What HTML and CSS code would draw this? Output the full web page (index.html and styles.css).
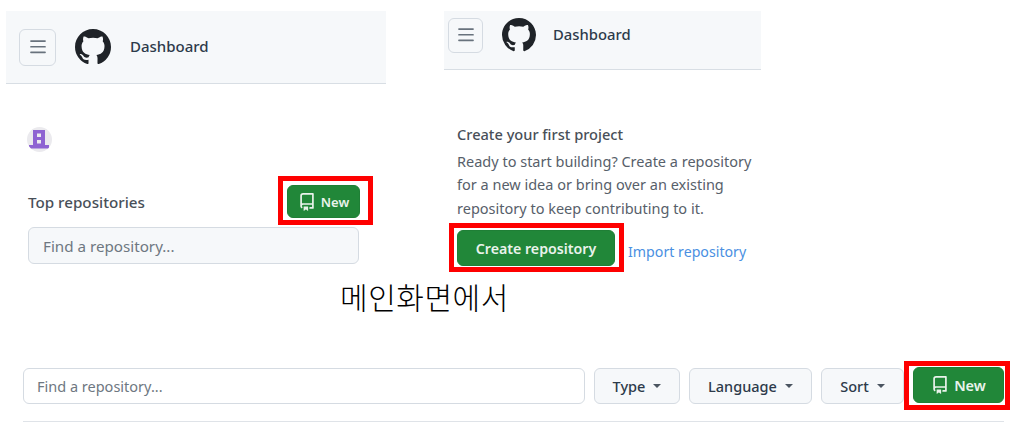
FILE: index.html
```html
<!DOCTYPE html>
<html lang="ko">
<head>
<meta charset="utf-8">
<title>Dashboard</title>
<link rel="stylesheet" href="styles.css">
</head>
<body>
<svg class="defs" width="0" height="0" aria-hidden="true">
  <symbol id="mark" viewBox="0 0 16 16"><path d="M8 0c4.42 0 8 3.58 8 8a8.013 8.013 0 0 1-5.45 7.59c-.4.08-.55-.17-.55-.38 0-.27.01-1.13.01-2.2 0-.75-.25-1.23-.54-1.48 1.78-.2 3.65-.88 3.65-3.95 0-.88-.31-1.59-.82-2.15.08-.2.36-1.02-.08-2.12 0 0-.67-.22-2.2.82-.64-.18-1.32-.27-2-.27-.68 0-1.36.09-2 .27-1.53-1.03-2.2-.82-2.2-.82-.44 1.1-.16 1.92-.08 2.12-.51.56-.82 1.28-.82 2.15 0 3.06 1.86 3.75 3.64 3.95-.23.2-.44.55-.51 1.07-.46.21-1.61.55-2.33-.66-.15-.24-.6-.83-1.23-.82-.67.01-.27.38.01.53.34.19.73.9.82 1.13.16.45.68 1.31 2.69.94 0 .67.01 1.3.01 1.49 0 .21-.15.45-.55.38A7.995 7.995 0 0 1 0 8c0-4.42 3.58-8 8-8Z"/></symbol>
  <symbol id="repo" viewBox="0 0 16 16"><path d="M2 2.5A2.5 2.5 0 0 1 4.5 0h8.75a.75.75 0 0 1 .75.75v12.5a.75.75 0 0 1-.75.75h-2.5a.75.75 0 0 1 0-1.5h1.75v-2h-8a1 1 0 0 0-.714 1.7.75.75 0 1 1-1.072 1.05A2.495 2.495 0 0 1 2 11.5Zm10.5-1h-8a1 1 0 0 0-1 1v6.708A2.486 2.486 0 0 1 4.5 9h8ZM5 12.25a.25.25 0 0 1 .25-.25h3.5a.25.25 0 0 1 .25.25v3.25a.25.25 0 0 1-.4.2l-1.45-1.087a.249.249 0 0 0-.3 0L5.4 15.7a.25.25 0 0 1-.4-.2Z"/></symbol>
  <symbol id="menu" viewBox="0 0 16 16"><path d="M1 2.75A.75.75 0 0 1 1.75 2h12.5a.75.75 0 0 1 0 1.5H1.75A.75.75 0 0 1 1 2.75Zm0 5A.75.75 0 0 1 1.75 7h12.5a.75.75 0 0 1 0 1.5H1.75A.75.75 0 0 1 1 7.75ZM1.75 12h12.5a.75.75 0 0 1 0 1.5H1.75a.75.75 0 0 1 0-1.5Z"/></symbol>
</svg>

<main class="page">
  <div class="shots">
    <section class="shot shot-left">
      <header class="topbar topbar-large">
        <button class="menu-btn menu-btn-large" aria-label="Menu"><svg class="menu-icon"><use href="#menu"/></svg></button>
        <svg class="logo logo-large"><use href="#mark"/></svg>
        <span class="topbar-title">Dashboard</span>
      </header>
      <div class="sidebar">
        <div class="avatar">
          <svg viewBox="0 0 25 25" width="25" height="25">
            <path class="avatar-glyph" d="M6 3h12v15h4v3.5H2V18h4z"/>
            <rect class="avatar-hole" x="10" y="6.5" width="4" height="3.5"/>
            <rect class="avatar-hole" x="10" y="13" width="4" height="3.5"/>
          </svg>
        </div>
        <div class="repos-head">
          <h2 class="repos-title">Top repositories</h2>
          <div class="highlight highlight-new-small">
            <button class="btn-green btn-new-small"><svg class="repo-icon"><use href="#repo"/></svg>New</button>
          </div>
        </div>
        <div class="find find-filled">Find a repository...</div>
      </div>
    </section>

    <section class="shot shot-right">
      <header class="topbar topbar-small">
        <button class="menu-btn menu-btn-small" aria-label="Menu"><svg class="menu-icon"><use href="#menu"/></svg></button>
        <svg class="logo logo-small"><use href="#mark"/></svg>
        <span class="topbar-title">Dashboard</span>
      </header>
      <div class="intro">
        <h2 class="intro-title">Create your first project</h2>
        <p class="intro-text">Ready to start building? Create a repository<br>for a new idea or bring over an existing<br>repository to keep contributing to it.</p>
        <div class="intro-actions">
          <div class="highlight highlight-create">
            <button class="btn-green btn-create">Create repository</button>
          </div>
          <a class="import-link" href="#">Import repository</a>
        </div>
      </div>
    </section>
  </div>

  <p class="caption">메인화면에서</p>

  <div class="toolbar">
    <div class="find find-wide">Find a repository...</div>
    <button class="select select-type">Type<i class="caret"></i></button>
    <button class="select select-language">Language<i class="caret"></i></button>
    <button class="select select-sort">Sort<i class="caret"></i></button>
    <div class="highlight highlight-new-large">
      <button class="btn-green btn-new-large"><svg class="repo-icon"><use href="#repo"/></svg>New</button>
    </div>
  </div>
  <hr class="divider">
</main>
</body>
</html>
```

FILE: styles.css
```css
* { box-sizing: border-box; }

html, body { margin: 0; padding: 0; background: #fff; }

body {
  width: 1023px;
  height: 427px;
  overflow: hidden;
  font-family: "Noto Sans", "Open Sans", "Liberation Sans", sans-serif;
  font-size: 14px;
  color: #24292f;
}

.defs { display: block; height: 0; }

.page { display: flex; flex-direction: column; }

.shots { display: flex; align-items: flex-start; padding: 11px 0 0 6px; }

.shot-left { width: 380px; }
.shot-right { width: 317px; margin-left: 58px; }

.topbar {
  display: flex;
  align-items: center;
  background: #f6f8fa;
  border-bottom: 1px solid #d8dee4;
}
.topbar-large { height: 73px; padding-left: 13px; }
.topbar-small { height: 59px; padding-left: 4px; }

.menu-btn {
  display: flex;
  align-items: center;
  justify-content: center;
  padding: 0;
  background: #f6f8fa;
  border: 1px solid #d5dbe2;
  border-radius: 6px;
}
.menu-btn-large { width: 37px; height: 37px; margin-right: 19px; }
.menu-btn-small { width: 35px; height: 35px; margin-right: 19px; margin-top: -10px; }

.menu-icon { width: 18px; height: 18px; fill: #68727d; }

.logo { fill: #1f2328; flex: none; }
.logo-large { width: 36px; height: 36px; margin-right: 19px; }
.logo-small { width: 34px; height: 34px; margin-right: 17px; margin-top: -10px; }

.topbar-title { font-size: 15px; font-weight: 500; color: #2d3a4a; }
.topbar-large .topbar-title { margin-top: -2px; }
.topbar-small .topbar-title { margin-top: -12px; font-size: 14.8px; }

.sidebar { padding: 43px 13px 0 22px; }

.avatar {
  width: 25px;
  height: 25px;
  border-radius: 50%;
  background: #ebeaee;
  margin-left: -1px;
  overflow: hidden;
}
.avatar svg { display: block; }
.avatar-glyph { fill: #8e63d2; }
.avatar-hole { fill: #ebeaee; }

.repos-head {
  display: flex;
  align-items: center;
  justify-content: space-between;
  margin-top: 24px;
}
.repos-title { margin: 2px 0 0; font-size: 15.2px; font-weight: 500; color: #484f58; }

.highlight { border: 5px solid #fe0000; background: #fff; }
.highlight-new-small { padding: 4px 8px 2px 4px; }
.highlight-create { padding: 2px 4px 1px 3px; }
.highlight-new-large { padding: 1px 1px 2px 4px; }

.btn-green {
  display: flex;
  align-items: center;
  justify-content: center;
  padding: 0;
  background: #218739;
  border: 1px solid #1f7f36;
  border-radius: 6px;
  color: #eaf3ec;
  font-family: inherit;
  font-weight: 600;
}
.btn-new-small { width: 73px; height: 33px; font-size: 13px; }
.btn-new-large { width: 91px; height: 36px; font-size: 14.5px; }
.btn-create { width: 158px; height: 36px; font-size: 14.2px; }

.repo-icon { width: 18px; height: 18px; fill: currentColor; margin-right: 5px; }

.find {
  display: flex;
  align-items: center;
  height: 37px;
  border: 1px solid #d5dbe2;
  border-radius: 6px;
  color: #6e7781;
  font-size: 14.5px;
}
.find-filled { width: 331px; margin-top: 2px; padding-left: 14px; background: #f6f8fa; font-size: 15.2px; }
.find-wide { width: 562px; height: 36px; padding-left: 13px; background: #fff; }

.intro { padding: 55px 0 0 13px; }
.intro-title { margin: 0; font-size: 14.6px; line-height: 19px; font-weight: 500; color: #484f58; }
.intro-text { margin: 6px 0 0; font-size: 14.5px; line-height: 23.4px; color: #57606a; white-space: nowrap; }

.intro-actions { display: flex; margin: 3px 0 0 -8px; }
.import-link {
  margin: 19px 0 0 4px;
  font-size: 14.2px;
  color: #4a90e2;
  text-decoration: none;
  white-space: nowrap;
}

.caption {
  margin: 6px 0 0 340px;
  font-family: "Noto Sans CJK KR", sans-serif;
  font-size: 30px;
  font-weight: 300;
  line-height: 36px;
  letter-spacing: 0.55px;
  color: #000;
}

.toolbar { display: flex; align-items: center; gap: 9px; margin-top: 47px; padding-left: 23px; }

.select {
  display: flex;
  align-items: center;
  justify-content: center;
  height: 36px;
  padding: 0;
  background: #f6f8fa;
  border: 1px solid #d5dbe2;
  border-radius: 6px;
  color: #2d3a4a;
  font-family: inherit;
  font-size: 14.5px;
  font-weight: 500;
}
.select-type { width: 86px; }
.select-language { width: 123px; }
.select-sort { width: 83px; margin-right: -9px; }

.caret {
  width: 0;
  height: 0;
  margin-left: 8px;
  border-style: solid;
  border-width: 4px 4px 0;
  border-color: #4b5560 transparent transparent;
}

.divider {
  width: 981px;
  height: 1px;
  margin: 11px 0 0 23px;
  border: 0;
  background: #dfe3e8;
}
```
